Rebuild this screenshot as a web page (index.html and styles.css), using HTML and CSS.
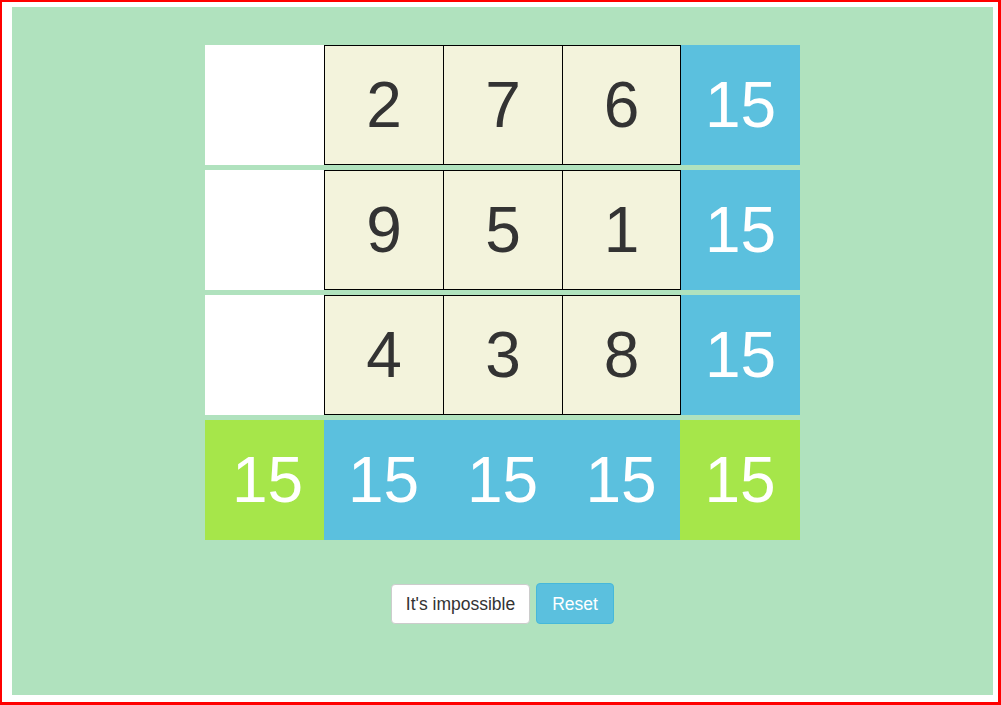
FILE: index.html
```html
<!DOCTYPE html>
<html>
<head>
<meta charset="utf-8">
<link rel="stylesheet" href="styles.css">
</head>
<body>
<div class="frame">
  <div class="stage">
    <div class="board">
      <div class="row">
        <div class="cell blank"></div>
        <div class="cell tile">2</div>
        <div class="cell tile">7</div>
        <div class="cell tile last">6</div>
        <div class="cell sum">15</div>
      </div>
      <div class="row">
        <div class="cell blank"></div>
        <div class="cell tile">9</div>
        <div class="cell tile">5</div>
        <div class="cell tile last">1</div>
        <div class="cell sum">15</div>
      </div>
      <div class="row">
        <div class="cell blank"></div>
        <div class="cell tile">4</div>
        <div class="cell tile">3</div>
        <div class="cell tile last">8</div>
        <div class="cell sum">15</div>
      </div>
      <div class="row">
        <div class="cell diag left">15</div>
        <div class="cell sum col">15</div>
        <div class="cell sum col">15</div>
        <div class="cell sum col mid">15</div>
        <div class="cell diag right">15</div>
      </div>
    </div>
    <div class="actions">
      <button class="btn btn-default">It's impossible</button>
      <button class="btn btn-info">Reset</button>
    </div>
  </div>
</div>
</body>
</html>
```
FILE: styles.css
```css
html, body {
  margin: 0;
  padding: 0;
  background: #fff;
}
.frame {
  box-sizing: border-box;
  width: 1001px;
  height: 705px;
  border: 2px solid #ff0000;
  border-right-width: 3px;
  border-bottom-width: 3px;
  padding: 5px 5px 7px 10px;
  font-family: "Liberation Sans", Arial, sans-serif;
}
.stage {
  background: #b0e2be;
  height: 688px;
  padding-top: 38px;
  box-sizing: border-box;
  display: flex;
  flex-direction: column;
  align-items: center;
}
.board {
  display: flex;
  flex-direction: column;
  gap: 5px;
  width: 595px;
}
.row {
  display: flex;
  height: 120px;
}
.cell {
  box-sizing: border-box;
  height: 120px;
  display: flex;
  align-items: center;
  justify-content: center;
  font-size: 64px;
  line-height: 1;
}
.blank {
  width: 119px;
  background: #fff;
}
.tile {
  width: 120px;
  background: #f3f3dc;
  border: 1px solid #000;
  color: #333;
  margin-right: -1px;
}
.tile.last {
  width: 119px;
  margin-right: 0;
}
.sum {
  width: 119px;
  background: #5bc0de;
  color: #fff;
}
.sum.col {
  width: 119px;
}
.sum.col.mid {
  width: 118px;
}
.diag {
  background: #a6e64a;
  color: #fff;
}
.diag.left {
  width: 119px;
  padding-left: 6px;
}
.diag.right {
  width: 120px;
}
.actions {
  margin-top: 43px;
  display: flex;
  gap: 6px;
}
.btn {
  font-family: "Liberation Sans", Arial, sans-serif;
  font-size: 17.5px;
  line-height: 20px;
  height: 41px;
  box-sizing: border-box;
  border-radius: 4px;
  border: 1px solid #ccc;
  cursor: pointer;
  padding: 9px 0;
  text-align: center;
}
.btn-default {
  background: #fff;
  color: #333;
  width: 139px;
  margin-top: 1px;
  height: 40px;
}
.btn-info {
  background: #5bc0de;
  border-color: #46b8da;
  color: #fff;
  width: 78px;
}
```
